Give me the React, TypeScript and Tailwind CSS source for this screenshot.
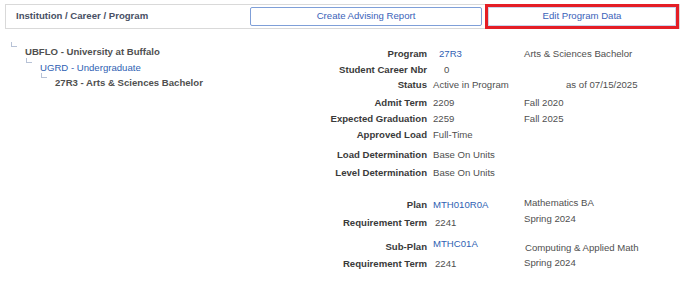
type Field = {
  label: string;
  value: string;
  link?: boolean;
  note?: string;
  h: string;
  valueCls?: string;
  noteCls?: string;
};

const fields: Field[] = [
  { label: 'Program', value: '27R3', link: true, note: 'Arts & Sciences Bachelor', h: 'h-[16px]', valueCls: 'pl-[6px]' },
  { label: 'Student Career Nbr', value: '0', h: 'h-[15px]', valueCls: 'pl-[11px]' },
  { label: 'Status', value: 'Active in Program', note: 'as of 07/15/2025', h: 'h-[18px]', noteCls: 'pl-[42px]' },
  { label: 'Admit Term', value: '2209', note: 'Fall 2020', h: 'h-[16px]' },
  { label: 'Expected Graduation', value: '2259', note: 'Fall 2025', h: 'h-[16px]' },
  { label: 'Approved Load', value: 'Full-Time', h: 'h-[20px]' },
  { label: 'Load Determination', value: 'Base On Units', h: 'h-[18px]' },
  { label: 'Level Determination', value: 'Base On Units', h: 'h-[32px]' },
  { label: 'Plan', value: 'MTH010R0A', link: true, note: 'Mathematics BA', h: 'h-[18px]', noteCls: '-mt-[2px]' },
  { label: 'Requirement Term', value: '2241', note: 'Spring 2024', h: 'h-[24px]', valueCls: 'pl-[2px]', noteCls: '-mt-[4px]' },
  { label: 'Sub-Plan', value: 'MTHC01A', link: true, note: 'Computing & Applied Math', h: 'h-[17px]', valueCls: '-ml-[2px] -mt-[3px]', noteCls: 'mt-[1px] pl-px' },
  { label: 'Requirement Term', value: '2241', note: 'Spring 2024', h: 'h-[16px]', valueCls: 'pl-[2px]', noteCls: '-mt-px' },
];

const tree = [
  { text: 'UBFLO - University at Buffalo', indent: 'pl-[11px]', cls: 'font-bold text-[#505050]', h: 'h-[16px]' },
  { text: 'UGRD - Undergraduate', indent: 'pl-[26px]', cls: 'text-[#2f5fb3]', h: 'h-[15px]' },
  { text: '27R3 - Arts & Sciences Bachelor', indent: 'pl-[41px]', cls: 'font-bold text-[#505050]', h: 'h-[16px]' },
];

export default function App() {
  return (
    <div className="h-[284px] w-[680px] overflow-hidden bg-white font-['Liberation_Sans',Arial,sans-serif] text-[9.6px]">
      <div className="ml-[5px] mt-[4px] flex h-[25px] w-[675px] items-center border border-[#d9d9d9]">
        <div className="w-[244px] pl-[10px] font-bold text-[#485064]">Institution / Career / Program</div>
        <button className="h-[19px] w-[232px] rounded-[2px] border border-[#7f9fd8] bg-white text-[#3b63b9]">
          Create Advising Report
        </button>
        <button className="ml-[6px] h-[19px] w-[188px] border border-[#c9d5ec] bg-white text-[#3b63b9] outline-3 outline-[#e41e26]">
          Edit Program Data
        </button>
      </div>

      <div className="flex items-start">
        <div className="mt-[15px] w-[300px]">
          {tree.map((t) => (
            <div key={t.text} className={`flex ${t.h} leading-[16px] ${t.indent}`}>
              <span className="-mt-[2px] h-[5px] w-[6px] shrink-0 border-b border-l border-[#b7c2d6]" />
              <span className={`ml-[8px] ${t.cls}`}>{t.text}</span>
            </div>
          ))}
        </div>

        <div className="mt-[17px] w-[380px]">
          {fields.map((f, i) => (
            <div key={i} className={`flex items-start ${f.h} leading-[16px]`}>
              <div className="w-[127px] text-right font-bold text-[#3a3a3a]">{f.label}</div>
              <div className={`ml-[6px] w-[91px] ${f.link ? 'text-[#2f5fb3]' : 'text-[#4f4f4f]'} ${f.valueCls ?? ''}`}>
                {f.value}
              </div>
              {f.note && <div className={`text-[#4f4f4f] ${f.noteCls ?? ''}`}>{f.note}</div>}
            </div>
          ))}
        </div>
      </div>
    </div>
  );
}
